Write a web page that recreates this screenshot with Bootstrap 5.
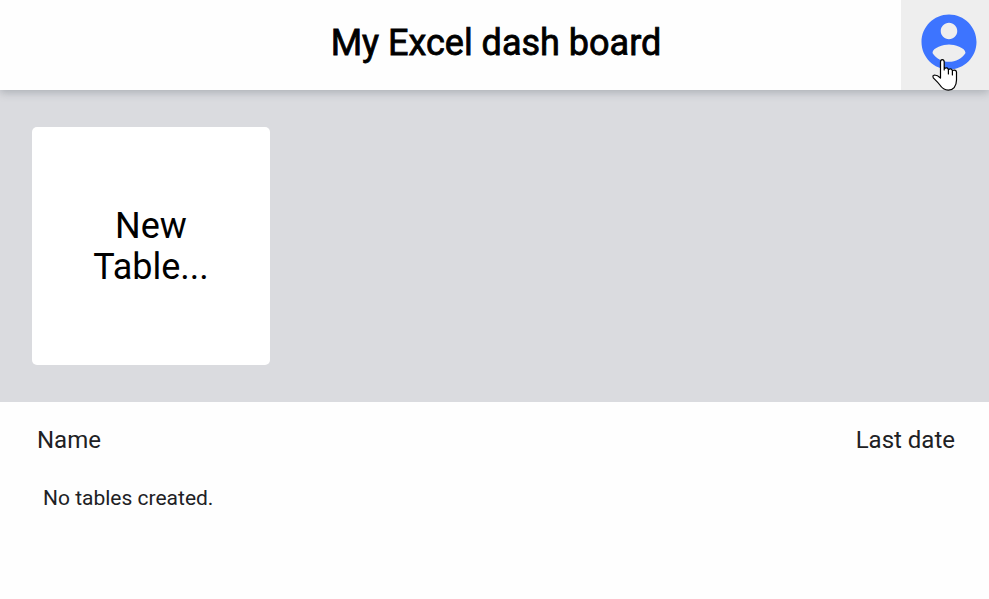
<!DOCTYPE html>
<html lang="en">
<head>
<meta charset="utf-8">
<title>My Excel dash board</title>
<link href="https://cdn.jsdelivr.net/npm/bootstrap@5.3.0/dist/css/bootstrap.min.css" rel="stylesheet">
<style>
body{font-family:Roboto,sans-serif;background:#fefefe;color:#202124;height:599px;overflow:hidden}
.top-bar{height:90px;background:#fefefe;box-shadow:0 3px 8px rgba(60,70,80,.27);z-index:2}
.top-title{font-size:36px;line-height:42px;font-weight:400;color:#000;-webkit-text-stroke:.8px #000;padding-left:3px;padding-bottom:4px}
.side-slot{width:88px}
.user-btn{background:#eee;padding:0 0 6px 8px}
.create-area{height:312px;background:#dadbdf;padding:37px 32px}
.new-table{width:238px;height:238px;border-radius:5px;padding-top:2px;font-size:36px;line-height:41px;color:#000}
.list-head{padding:23px 34px 0 37px;font-size:24px;line-height:30px}
.empty-note{padding:30px 43px;font-size:21px;line-height:26px}
.pointer{left:931px;top:58px;z-index:3}
</style>
</head>
<body>
<header class="top-bar d-flex position-relative">
  <div class="side-slot"></div>
  <div class="flex-grow-1 d-flex align-items-center justify-content-center"><h1 class="top-title m-0">My Excel dash board</h1></div>
  <button class="side-slot user-btn btn border-0 rounded-0 d-flex align-items-center justify-content-center" aria-label="Account">
    <svg width="66" height="66" viewBox="0 0 24 24" fill="#3d74ff"><path d="M12 2C6.48 2 2 6.48 2 12s4.48 10 10 10 10-4.48 10-10S17.52 2 12 2zm0 3c1.66 0 3 1.34 3 3s-1.34 3-3 3-3-1.34-3-3 1.34-3 3-3zm0 14.2c-2.5 0-4.71-1.28-6-3.22.03-1.99 4-3.08 6-3.08 1.99 0 5.97 1.09 6 3.08-1.29 1.94-3.5 3.22-6 3.22z"/></svg>
  </button>
</header>
<svg class="pointer position-absolute" width="28" height="34" viewBox="0 0 28 34"><path d="M9.500 20V4Q9.500 1.600 11.300 1.600T13.200 4V12V10.500Q16.800 8.600 17.400 12V16V11.500Q20.800 9.700 21.400 13V17V12.500Q25.200 11.500 25.500 14V22C25.500 28.500 22 32.200 17.300 32.200C12.500 32.200 10.500 29.500 8.500 26.500C6.800 24 4.200 22 2.300 19.800Q1.200 17.300 3.500 17Q6.500 17 9.500 20Z" fill="#fff" stroke="#000" stroke-width="1.200" stroke-linejoin="round"/></svg>
<main>
  <section class="create-area"><div class="new-table d-flex bg-white align-items-center justify-content-center text-center">New<br>Table...</div></section>
  <section>
    <div class="list-head d-flex justify-content-between"><span>Name</span><span>Last date</span></div>
    <div class="empty-note">No tables created.</div>
  </section>
</main>
<script src="https://cdn.jsdelivr.net/npm/bootstrap@5.3.0/dist/js/bootstrap.bundle.min.js"></script>
</body>
</html>
